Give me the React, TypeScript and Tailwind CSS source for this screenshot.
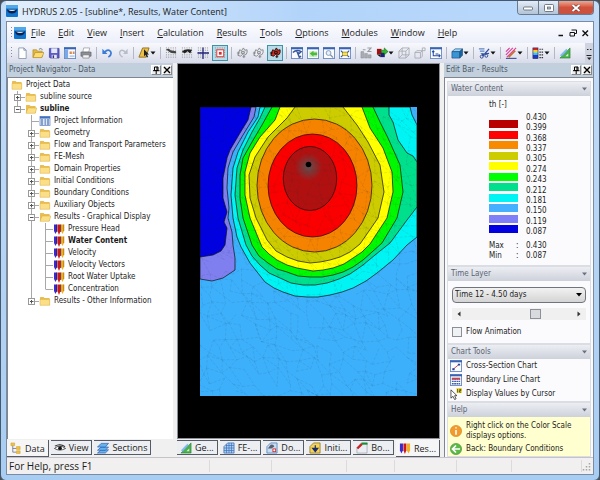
import { useState } from "react";
import type { ReactNode } from "react";
import clsx from "clsx";

type Cell = "blank" | "line" | "tee" | "end" | "plus" | "plusEnd" | "minus" | "minusEnd";
type IconName = "folder" | "open" | "info" | "pens";

const TREE: { label: string; cells: Cell[]; icon: IconName }[] = [
  { label: "Project Data", cells: [], icon: "folder" },
  { label: "subline source", cells: ["plus"], icon: "folder" },
  { label: "subline", cells: ["minusEnd"], icon: "open" },
  { label: "Project Information", cells: ["blank", "tee"], icon: "info" },
  { label: "Geometry", cells: ["blank", "plus"], icon: "folder" },
  { label: "Flow and Transport Parameters", cells: ["blank", "plus"], icon: "folder" },
  { label: "FE-Mesh", cells: ["blank", "plus"], icon: "folder" },
  { label: "Domain Properties", cells: ["blank", "plus"], icon: "folder" },
  { label: "Initial Conditions", cells: ["blank", "plus"], icon: "folder" },
  { label: "Boundary Conditions", cells: ["blank", "plus"], icon: "folder" },
  { label: "Auxiliary Objects", cells: ["blank", "plus"], icon: "folder" },
  { label: "Results - Graphical Display", cells: ["blank", "minus"], icon: "open" },
  { label: "Pressure Head", cells: ["blank", "line", "tee"], icon: "pens" },
  { label: "Water Content", cells: ["blank", "line", "tee"], icon: "pens" },
  { label: "Velocity", cells: ["blank", "line", "tee"], icon: "pens" },
  { label: "Velocity Vectors", cells: ["blank", "line", "tee"], icon: "pens" },
  { label: "Root Water Uptake", cells: ["blank", "line", "tee"], icon: "pens" },
  { label: "Concentration", cells: ["blank", "line", "end"], icon: "pens" },
  { label: "Results - Other Information", cells: ["blank", "plusEnd"], icon: "folder" },
];

const MENUS = ["File", "Edit", "View", "Insert", "Calculation", "Results", "Tools", "Options", "Modules", "Window", "Help"];

const SCALE = [
  { value: "0.430", color: "bg-[#b80000]" },
  { value: "0.399", color: "bg-[#ff0000]" },
  { value: "0.368", color: "bg-[#f88a00]" },
  { value: "0.337", color: "bg-[#cccc00]" },
  { value: "0.305", color: "bg-[#ffff00]" },
  { value: "0.274", color: "bg-[#00ff00]" },
  { value: "0.243", color: "bg-[#00e08c]" },
  { value: "0.212", color: "bg-[#00f4f4]" },
  { value: "0.181", color: "bg-[#44b0ff]" },
  { value: "0.150", color: "bg-[#7f7ff8]" },
  { value: "0.119", color: "bg-[#0000e0]" },
  { value: "0.087", color: "" },
];

function Svg({ w = 12, h = 12, vb, children }: { w?: number; h?: number; vb?: string; children: ReactNode }) {
  return (
    <svg width={w} height={h} viewBox={vb ?? `0 0 ${w} ${h}`} className="shrink-0" aria-hidden="true">
      {children}
    </svg>
  );
}

function TreeCell({ kind }: { kind: Cell }) {
  const box = kind.startsWith("plus") || kind.startsWith("minus");
  const last = kind.endsWith("End") || kind === "end";
  return (
    <Svg w={14} h={12}>
      {kind !== "blank" && <path d={last ? "M6.5 0V6" : "M6.5 0V12"} stroke="#a8a8a8" />}
      {kind !== "blank" && kind !== "line" && <path d="M6.5 6.5H14" stroke="#a8a8a8" />}
      {box && <rect x="3.5" y="3.5" width="6" height="6" fill="#fff" stroke="#999" />}
      {box && <path d="M5 6.5H8.5" stroke="#555" />}
      {kind.startsWith("plus") && <path d="M6.5 5V8.5" stroke="#555" />}
    </Svg>
  );
}

function Pens() {
  return (
    <Svg w={12} h={12}>
      <path d="M1 1.5H4V8L2.5 11L1 8Z" fill="#3a2bd0" />
      <path d="M4.5 1.5H7.5V8L6 12L4.5 8Z" fill="#cc1818" />
      <path d="M8 1.5H11V8L9.5 11L8 8Z" fill="#f0b020" />
      <path d="M3.8 1.5V9M7.6 1.5V9" stroke="#401030" strokeWidth="0.7" />
      <path d="M10.8 1.5V8" stroke="#8a5a10" strokeWidth="0.6" />
    </Svg>
  );
}

function TreeIcon({ name }: { name: IconName }) {
  if (name === "pens") return <Pens />;
  if (name === "info")
    return (
      <Svg>
        <rect x="1" y="1.5" width="10" height="9" fill="#dce9fb" stroke="#6f8fc4" strokeWidth="0.8" />
        <rect x="1" y="1.5" width="10" height="2" fill="#3f6fc0" />
        <path d="M3 4V10M5.5 5H7M8 5H10M5.5 7H7M8 7H10M5.5 9H7M8 9H10" stroke="#33569a" strokeWidth="1" />
      </Svg>
    );
  return (
    <Svg>
      <path d="M1 2.5Q1 2 1.5 2H4.5L5.5 3H10Q10.7 3 10.7 3.7V10H1Z" fill="#e9bd50" />
      {name === "open" ? (
        <path d="M1 10.3L3 5H11.8L10.2 10.3Z" fill="#fbdf86" stroke="#d9a93c" strokeWidth="0.5" />
      ) : (
        <path d="M1 4.4H10.7V10.3H1Z" fill="#fadf88" stroke="#dcae45" strokeWidth="0.5" />
      )}
    </Svg>
  );
}

function AppIcon() {
  return (
    <Svg w={12} h={12}>
      <rect width="12" height="12" rx="1" fill="#1173c9" />
      <rect width="12" height="3.5" fill="#4fa8e8" />
      <path d="M1 4.5H11Q10.5 8.5 6 8.5T1 4.5Z" fill="#08204f" />
      <path d="M2 4.8H10Q8 6 6 6T2 4.8Z" fill="#e8f4ff" />
    </Svg>
  );
}

function PanelHead({ title }: { title: string }) {
  return (
    <div className="flex h-[14px] items-center gap-px bg-[#c2cfdd] pl-0.5 pr-px text-[#4f5b68]">
      <h2 className="flex-1 truncate leading-[12px]">{title}</h2>
      <button aria-label={`Pin ${title}`} className="border border-white border-b-[#888] border-r-[#888] bg-[#f0f0f0]">
        <Svg w={8} h={8}>
          <path d="M2.5 1H6V4.5H2.5ZM1 4.7H7.5M4.2 5V8" fill="none" stroke="#000" />
          <path d="M5 1V5" stroke="#000" />
        </Svg>
      </button>
      <button aria-label={`Close ${title}`} className="border border-white border-b-[#888] border-r-[#888] bg-[#f0f0f0]">
        <Svg w={8} h={8}>
          <path d="M1 1L7 7M7 1L1 7" stroke="#000" strokeWidth="1.4" />
        </Svg>
      </button>
    </div>
  );
}

function WindowFrame({ children }: { children?: ReactNode }) {
  return (
    <>
      <rect x="0.5" y="0.5" width="12" height="12" fill="#fafcff" stroke="#6c8cc0" />
      <path d="M0 1.5H13" stroke="#3864b4" strokeWidth="2" />
      {children}
    </>
  );
}

function Dots({ children }: { children?: ReactNode }) {
  return (
    <>
      {[1, 3.5, 6, 8.5, 11].map((y) => (
        <path key={y} d={`M1 ${y}H13`} stroke="#888" strokeWidth="1" strokeDasharray="1 1.5" />
      ))}
      {children}
    </>
  );
}

function Gear({ color, fill }: { color: string; fill: string }) {
  return (
    <>
      <path d="M4 3L6 4L8 1L9.5 3.5L12 3V6L11 8L8.5 9L7 8L5 10L2 9L3 6Z" fill={fill} stroke={color} strokeWidth="1" />
      <path d="M1 6.5H4M2.5 5V8M8.5 9V12M7 10.5H10M6 5H9V7H6Z" fill="none" stroke={color} strokeWidth="1" />
    </>
  );
}

type Tool = { name: string; art: ReactNode; drop?: boolean; on?: boolean; sep?: boolean };

const TOOLS: Tool[] = [
  { name: "New", art: <path d="M3 1H8.5L11 3.5V12.5H3ZM8.5 1V3.5H11" fill="#fff" stroke="#7486a0" strokeWidth="0.8" /> },
  {
    name: "Open",
    art: (
      <>
        <path d="M1 3H5L6 4.5H11V11H1Z" fill="#e5b83c" stroke="#a57c18" strokeWidth="0.6" />
        <path d="M1 11.5L3.5 6H13L10.5 11.5Z" fill="#fbdd74" stroke="#a57c18" strokeWidth="0.6" />
        <path d="M7.5 2.5Q9.5 0.5 11.5 3" fill="none" stroke="#456" strokeWidth="0.8" />
      </>
    ),
  },
  {
    name: "Save",
    art: (
      <>
        <path d="M1.5 1.5H12V12H2.5L1.5 11Z" fill="#5b5cc8" stroke="#36378c" strokeWidth="0.7" />
        <rect x="3.5" y="1.5" width="6.5" height="5" fill="#e4e8ff" />
        <rect x="4" y="8.5" width="5.5" height="3.5" fill="#e8e8f0" />
        <rect x="5" y="9" width="1.6" height="3" fill="#33347c" />
      </>
    ),
  },
  {
    name: "Project manager",
    art: (
      <WindowFrame>
        <rect x="1" y="2.5" width="3.5" height="9.5" fill="#7aa8e8" />
        <path d="M6 5H8.5V7.5H6ZM9.5 5H11.5V7.5H9.5Z" fill="#d88a50" />
        <path d="M6 9H11.5V11H6Z" fill="#b9cdea" />
      </WindowFrame>
    ),
  },
  {
    name: "Print",
    sep: true,
    art: (
      <>
        <path d="M4 1H10.5L9.5 5.5H3Z" fill="#fff" stroke="#778" strokeWidth="0.6" />
        <path d="M1 5.5H12V10H1Z" fill="#8a9098" stroke="#555" strokeWidth="0.6" />
        <path d="M3 8.5H10V12H3Z" fill="#f2f2f2" stroke="#666" strokeWidth="0.6" />
      </>
    ),
  },
  {
    name: "Undo",
    art: (
      <>
        <path d="M4 5.5Q8 1.5 10.5 5.2Q12 8.5 8 11" fill="none" stroke="#3a7ad8" strokeWidth="1.8" />
        <path d="M1.5 2V7.5H7Z" fill="#3a7ad8" />
      </>
    ),
  },
  {
    name: "Redo",
    sep: true,
    art: (
      <>
        <path d="M9 5.5Q5 1.8 3 5.2Q2 8.5 6 11" fill="none" stroke="#b6bdc8" strokeWidth="1.6" />
        <path d="M11.5 2V7.5H6.5Z" fill="#b6bdc8" />
      </>
    ),
  },
  {
    name: "Select",
    drop: true,
    sep: true,
    art: (
      <>
        <path d="M1 11L5 1H12L8.5 11Z" fill="#ecbf48" stroke="#8a6510" strokeWidth="0.9" />
        <path d="M6.5 2.5V10L8.2 8.5L9.5 11.5L11 10.8L9.8 8H12Z" fill="#222" />
      </>
    ),
  },
  { name: "Grid snap", art: <Dots><path d="M1 2.5Q4 1 6 3.5L12 4.5V7L7 6.5L4 5Z" fill="#444" /></Dots> },
  { name: "Grid origin", art: <Dots><path d="M1 5Q5 1 12 3L10 7L7 4.5L4 7Z" fill="#222" /></Dots> },
  { name: "Axes", art: <Dots><path d="M0.5 6.5H13M6.5 0.5V13" stroke="#23267c" strokeWidth="1.4" /></Dots> },
  {
    name: "Show grid",
    on: true,
    sep: true,
    art: (
      <Dots>
        <rect x="3" y="3" width="7.5" height="7.5" fill="#fff" stroke="#e04848" strokeWidth="1.2" />
        <rect x="5.3" y="5.3" width="3" height="3" fill="#d03030" />
      </Dots>
    ),
  },
  { name: "Mesh nodes", art: <Gear color="#85888e" fill="#dfe1e4" /> },
  { name: "Mesh edges", art: <Gear color="#85888e" fill="#eceef0" /> },
  { name: "Mesh contours", on: true, sep: true, art: <Gear color="#201010" fill="#d02c20" /> },
  {
    name: "Zoom view",
    art: (
      <WindowFrame>
        <path d="M2 6Q6 2 11 5L9 7L7 6L9 11L11 10" fill="none" stroke="#39579b" strokeWidth="1.6" />
      </WindowFrame>
    ),
  },
  {
    name: "Zoom previous",
    art: (
      <WindowFrame>
        <path d="M2.5 4.5H11V11H2.5Z" fill="#c9f0c0" />
        <path d="M3 7L7 4V6H11V9H7V10.5Z" fill="#4fb840" />
      </WindowFrame>
    ),
  },
  {
    name: "Zoom window",
    art: (
      <WindowFrame>
        <circle cx="6" cy="6.5" r="2.6" fill="#e6f1fb" stroke="#8397b0" />
        <path d="M8 8.5L11 11.5" stroke="#8397b0" strokeWidth="1.5" />
      </WindowFrame>
    ),
  },
  {
    name: "Fit to window",
    sep: true,
    art: (
      <WindowFrame>
        <path d="M2 4L4 6M11 4L9 6M2 11L4 9M11 11L9 9" stroke="#2856b0" strokeWidth="1.2" />
        <rect x="4" y="5.5" width="5" height="4" fill="#ffe24a" stroke="#6a6420" strokeWidth="0.6" />
      </WindowFrame>
    ),
  },
  {
    name: "Sort",
    art: (
      <>
        <path d="M1 5H4V12H1ZM5 7H8V12H5ZM9 8.5H12V12H9Z" fill="#a9adb2" stroke="#85898f" strokeWidth="0.5" />
        <path d="M3 3H6M8 1H12L8.5 5H12.5" fill="none" stroke="#999da3" strokeWidth="1.1" />
      </>
    ),
  },
  {
    name: "Colors",
    drop: true,
    art: (
      <>
        <rect x="1" y="2" width="5" height="6" fill="#a01010" />
        <rect x="5" y="6" width="4.5" height="5" fill="#1a2080" />
        <path d="M1 8H5V11Z" fill="#111" />
        <path d="M6 3.5H9V1L13 5L9 8.5V6.5H6Z" fill="#30b830" stroke="#0e5e10" strokeWidth="0.6" />
      </>
    ),
  },
  { name: "Wire box", art: <path d="M1 4.5H8.5V12H1ZM1 4.5L4.5 1H12V8.5L8.5 12M12 1L8.5 4.5M4.5 1V8.5H12M4.5 8.5L1 12" fill="none" stroke="#a4a8ae" strokeWidth="0.9" /> },
  { name: "Rotate box", art: <path d="M1 6H7V12H1ZM1 6L3 4H9V10L7 12M9 4L7 6M9 1H12V4H9Z" fill="none" stroke="#a4a8ae" strokeWidth="0.9" /> },
  {
    name: "Dimensions",
    sep: true,
    art: (
      <WindowFrame>
        <path d="M3.5 4V9.5H11M2.3 5.5L3.5 4L4.7 5.5M9.5 8L11 9.5L9.5 11M6 7.5H9" fill="none" stroke="#234a9e" strokeWidth="1.1" />
      </WindowFrame>
    ),
  },
  {
    name: "Solid view",
    drop: true,
    sep: true,
    art: (
      <>
        <path d="M1 5L4.5 2H12.5L9.5 5Z" fill="#9cd5f4" stroke="#184f80" strokeWidth="0.7" />
        <path d="M1 5H9.5V12H1Z" fill="#3b94d4" stroke="#184f80" strokeWidth="0.7" />
        <path d="M9.5 5L12.5 2V9L9.5 12Z" fill="#1c649e" stroke="#184f80" strokeWidth="0.7" />
      </>
    ),
  },
  {
    name: "Cut section",
    drop: true,
    sep: true,
    art: (
      <>
        <path d="M1 2H7M2 4.5H7M3 7H6" stroke="#5e87c4" strokeWidth="1.2" />
        <path d="M12 2L5 10M4 8L12 7" stroke="#3350a0" strokeWidth="1.4" />
        <circle cx="4" cy="10.5" r="1.6" fill="none" stroke="#2b4694" />
        <circle cx="9" cy="9.5" r="1.6" fill="none" stroke="#2b4694" />
      </>
    ),
  },
  {
    name: "Draw",
    drop: true,
    sep: true,
    art: (
      <>
        <path d="M1 5L5 1M1 8.5L8.5 1M2 11L12 1" stroke="#e0409a" strokeWidth="1.3" />
        <path d="M4 11L11 4" stroke="#c87030" strokeWidth="2" />
        <path d="M1 12.3H12.5" stroke="#30448c" strokeWidth="1.1" />
      </>
    ),
  },
  {
    name: "Color scale",
    drop: true,
    sep: true,
    art: (
      <>
        <path d="M1 1H6.5V3.5H1Z" fill="#e02020" />
        <path d="M1 3.5H6.5V6H1Z" fill="#ffd020" />
        <path d="M1 6H6.5V8.5H1Z" fill="#38c8e8" />
        <path d="M1 8.5H6.5V12.5H1Z" fill="#2038c8" />
        <rect x="1" y="1" width="5.5" height="11.5" fill="none" stroke="#222c60" strokeWidth="0.7" />
        <path d="M8 2.5H12M8 5.5H12M8 8.5H12M8 11.5H12" stroke="#333" strokeWidth="1.2" strokeDasharray="1.6 0.8" />
      </>
    ),
  },
  { name: "Geometry", art: <TriangleArt /> },
];

function TriangleArt() {
  return (
    <>
      <path d="M1 12L12 1V12Z" fill="#4cb04c" stroke="#1f7a30" strokeWidth="0.6" />
      <path d="M7 10H10V7Z" fill="#d9f2d4" />
      <path d="M1 9L8 2L9.5 3.5L3 10.5Z" fill="#6eb2ea" opacity="0.85" />
    </>
  );
}

function Toolbar() {
  return (
    <div className="flex h-5 items-center gap-[2px] overflow-hidden bg-gradient-to-b from-[#f8f9fd] to-[#d8dcea] pl-[3px]">
      <Grip />
      {TOOLS.map((t) => (
        <div key={t.name} className="flex shrink-0 items-center gap-[2px]">
          <button
            aria-label={t.name}
            className={clsx(
              "flex h-4 items-center border",
              t.on ? "border-[#3f93a8] bg-[#b8dce8] px-px" : "border-transparent"
            )}
          >
            <Svg w={12} h={12} vb="0 0 13 13">{t.art}</Svg>
            {t.drop && (
              <Svg w={6} h={4}>
                <path d="M0.5 0.5H5.5L3 3.5Z" fill="#111" />
              </Svg>
            )}
          </button>
          {t.sep && <span className="mx-px h-3 w-px bg-[#b4b8c4]" />}
        </div>
      ))}
      <button aria-label="More tools" className="ml-auto flex h-full w-2 flex-col items-center justify-center bg-[#cfd4e0]">
        <Svg w={6} h={13}>
          <path d="M1 2.5H2.5M4 2.5H5.5M0.5 8.5H5.5" stroke="#222" />
          <path d="M1 10.5H5.5L3.2 13Z" fill="#222" />
        </Svg>
      </button>
    </div>
  );
}

function Grip() {
  return (
    <Svg w={3} h={12}>
      <path d="M1.5 0V12" stroke="#8a90a0" strokeDasharray="1 2" />
    </Svg>
  );
}

const CONTOURS = [
  { fill: "#7f7ff0", d: "M0 0H56L54 10L43 28L33 45L28 61L27 81L29 101L28 111L32 125L33 138L35 151V163L23 171L12 174L0 172Z" },
  { fill: "#0000e0", d: "M0 0H51L48 13L40 26L30 43L27 51L23 71V91L27 105L24 115L27 121L25 138L21 144L13 148L0 150Z" },
  { fill: "#00f4f4", d: "M60 0L58 10L48 25L38 45L33 61L31 88L33 111L37 130L41 140L50 156L65 175L74 181L83 185L95 189L107 190L118 190L130 188L142 185L153 181L166 174L177 166L193 153L207 138L217 130V18L212 8L210 0Z" },
  { fill: "#00e08c", d: "M65 0L60 11L52 25L43 43L37 61L35 88L38 111L46 138L52 149L60 158L69 166L80 171L91 176L103 178L115 178L127 176L139 172L150 167L163 158L175 148L190 136L207 113L217 100V55L213 49L207 46L198 33L193 15L189 8V0Z" },
  { fill: "#00f800", d: "M72 0L62 18L52 35L43 51L40 68V91L43 111L52 138L59 149L68 156L77 162L87 165L98 169L110 170L122 170L133 168L143 165L153 160L163 153L172 145L182 136L197 111L203 85L200 58L188 31L180 15L173 0Z" },
  { fill: "#ffff00", d: "M80 0L75 13L60 30L50 46L45 65V88L50 111L62 140L69 147L77 153L87 158L97 161L113 164L123 163L133 161L144 157L153 151L162 145L170 137L187 111L193 85L192 65L183 41L170 21L162 0Z" },
  { fill: "#cccc00", d: "M95 0L87 11L68 30L55 50L49 68L50 91L56 111L67 133L76 144L87 150L98 154L110 156L120 155L130 153L140 150L150 145L160 137L178 111L184 85L180 58L168 35L157 18L143 0Z" },
];

// Jittered triangular mesh; the hash keeps node positions stable between renders.
function hash(i: number, j: number) {
  const s = Math.sin(i * 127.1 + j * 311.7) * 43758.5453;
  return s - Math.floor(s);
}

function meshPath() {
  const step = 11;
  const pt = (i: number, j: number) =>
    `${(i * step + (hash(i, j) - 0.5) * 9).toFixed(1)} ${(j * step + (hash(j + 50, i) - 0.5) * 9).toFixed(1)}`;
  let d = "";
  for (let j = 0; j < 27; j++) {
    for (let i = 0; i < 20; i++) {
      if (hash(i + 9, j + 4) > 0.3) d += `M${pt(i, j)}L${pt(i + 1, j)}`;
      if (hash(i + 3, j + 8) > 0.3) d += `M${pt(i, j)}L${pt(i, j + 1)}`;
      if (hash(i + 1, j + 2) > 0.4) d += `M${pt(i, j)}L${pt(i + 1, j + 1)}`;
    }
  }
  return d;
}

const MESH = meshPath();

function ContourPlot() {
  return (
    <svg viewBox="0 0 217 289" className="w-[217px] max-w-full" role="img" aria-label="Water content">
      <defs>
        <radialGradient id="source">
          <stop offset="0" stopColor="#5c5050" />
          <stop offset="1" stopColor="#b01010" />
        </radialGradient>
      </defs>
      <rect width="217" height="289" fill="#3db0fc" />
      {CONTOURS.map((c) => (
        <path key={c.d} d={c.d} fill={c.fill} stroke="#101010" strokeWidth="0.7" strokeLinejoin="round" />
      ))}
      <g stroke="#101010" strokeWidth="0.7">
        <ellipse cx="114.5" cy="78.5" rx="57.5" ry="66.5" fill="#f58300" />
        <ellipse cx="112.5" cy="78.5" rx="44.5" ry="51.5" fill="#fa0000" />
        <ellipse cx="110" cy="71.5" rx="26.7" ry="32" fill="#b01010" />
      </g>
      <circle cx="108.5" cy="60" r="14" fill="url(#source)" />
      <path d={MESH} stroke="#203040" strokeWidth="0.5" strokeDasharray="3 1.5" opacity="0.2" fill="none" />
      <circle cx="108.5" cy="57.5" r="2.8" fill="#000" />
    </svg>
  );
}

function Section({ title, className, children }: { title: string; className?: string; children: ReactNode }) {
  return (
    <section className="border border-[#dadde4] bg-[#fbfbfd]">
      <h3 className="flex h-[14px] items-center justify-between bg-gradient-to-b from-[#eceef3] to-[#cdd1da] px-[3px] text-[#5a6474]">
        {title}
        <Svg w={5} h={4}>
          <path d="M0 0.5H5L2.5 3.5Z" fill="#6a7080" />
        </Svg>
      </h3>
      <div className={className}>{children}</div>
    </section>
  );
}

function EditBar() {
  const [animate, setAnimate] = useState(false);
  return (
    <aside className="flex w-[149px] shrink-0 flex-col">
      <PanelHead title="Edit Bar - Results" />
      <div className="flex flex-1 flex-col border-l border-t border-[#808690] bg-[#fbfbfd] px-[2px] pt-[3px]">
        <Section title="Water Content" className="pb-1 pl-[41px] pt-[3px]">
          <div className="mb-[2px] leading-[12px]">th [-]</div>
          <div className="flex gap-2">
            <div className="flex h-[120px] w-[29px] flex-col justify-between pt-[7px]">
              {SCALE.filter((s) => s.color).map((s) => (
                <div key={s.value} className={clsx("h-2", s.color)} />
              ))}
            </div>
            <div className="flex h-[124px] flex-col justify-between">
              {SCALE.map((s) => (
                <div key={s.value} className="h-[10px] leading-[10px]">{s.value}</div>
              ))}
            </div>
          </div>
          <dl className="mt-1 grid grid-cols-[27px_10px_1fr] leading-[10px]">
            <dt>Max</dt><dd>:</dd><dd>0.430</dd>
            <dt>Min</dt><dd>:</dd><dd>0.087</dd>
          </dl>
        </Section>
        <Section title="Time Layer" className="px-1 pb-1.5 pt-1.5">
          <div className="relative">
            <select
              aria-label="Time layer"
              className="block h-4 w-full appearance-none rounded-sm border border-[#70747c] bg-gradient-to-b from-[#f2f2f2] to-[#d4d4d4] px-0.5 leading-[14px]"
            >
              <option>Time 12 - 4.50 days</option>
            </select>
            <span className="pointer-events-none absolute right-1 top-1.5">
              <Svg w={6} h={4}>
                <path d="M0 0H6L3 3.5Z" fill="#000" />
              </Svg>
            </span>
          </div>
          <div className="mt-[5px] flex h-3 items-center gap-1 bg-[#f0f0f0] px-1">
            <Svg w={6} h={8}><path d="M4.5 1.5V6.5L1.5 4Z" fill="#333" /></Svg>
            <input
              type="range"
              aria-label="Time step"
              defaultValue={67}
              className="h-3 min-w-0 flex-1 appearance-none bg-transparent [&::-webkit-slider-thumb]:h-[10px] [&::-webkit-slider-thumb]:w-[11px] [&::-webkit-slider-thumb]:appearance-none [&::-webkit-slider-thumb]:border [&::-webkit-slider-thumb]:border-[#8c9098] [&::-webkit-slider-thumb]:bg-[#d8dade]"
            />
            <Svg w={6} h={8}><path d="M1.5 1.5V6.5L4.5 4Z" fill="#333" /></Svg>
          </div>
          <label className="mt-[7px] flex items-center gap-1">
            <input
              type="checkbox"
              checked={animate}
              onChange={(e) => setAnimate(e.target.checked)}
              className="size-[10px] appearance-none border border-[#8a8e96] bg-[#f0f1f3] checked:bg-[#3a7ad8]"
            />
            Flow Animation
          </label>
        </Section>
        <Section title="Chart Tools" className="flex flex-col px-0.5">
          <button className="flex h-[14px] items-center gap-1 text-left">
            <Svg vb="0 0 13 13">
              <WindowFrame><path d="M3.5 10L9.5 5" stroke="#d04040" /><path d="M2.5 9H5V11H2.5ZM8.5 4H11V6H8.5Z" fill="#28409a" /></WindowFrame>
            </Svg>
            Cross-Section Chart
          </button>
          <button className="flex h-[14px] items-center gap-1 text-left">
            <Svg vb="0 0 13 13">
              <WindowFrame><path d="M2 5.5H11M2 8H11M2 10.5H11" stroke="#4060b0" strokeWidth="1.5" strokeDasharray="2 0.5" /><path d="M2 5H11" stroke="#d04040" strokeWidth="2" /></WindowFrame>
            </Svg>
            Boundary Line Chart
          </button>
          <button className="flex h-[14px] items-center gap-1 text-left">
            <Svg vb="0 0 13 13">
              <path d="M1 2V11L3.3 9L5 12.5L6.6 11.7L5 8.3H7.5Z" fill="#fff" stroke="#222" strokeWidth="0.8" />
              <rect x="7" y="0" width="6" height="5.5" fill="#f4e040" />
              <path d="M8.3 1V5M10 1.5H11.8V2.8H10.2V4.5H12" fill="none" stroke="#222" strokeWidth="0.8" />
            </Svg>
            Display Values by Cursor
          </button>
        </Section>
        <Section title="Help" className="flex flex-col gap-px bg-[#ffffcf] px-0.5 pt-1">
          <div className="flex items-center gap-1 leading-[10px]">
            <Svg vb="0 0 12 12">
              <circle cx="6" cy="6" r="5.6" fill="#f29a2e" stroke="#d97d10" strokeWidth="0.6" />
              <path d="M6 2.2V3.6M6 5V9.8" stroke="#fff" strokeWidth="1.6" />
            </Svg>
            <p className="max-w-[110px]">Right click on the Color Scale displays options.</p>
          </div>
          <button className="flex h-[14px] items-center gap-1 text-left">
            <Svg vb="0 0 12 12">
              <circle cx="6" cy="6" r="5.6" fill="#5cb848" stroke="#3f9030" strokeWidth="0.6" />
              <path d="M6 2.5L2.5 6L6 9.5M2.8 6H10" fill="none" stroke="#fff" strokeWidth="1.7" />
            </Svg>
            Back: Boundary Conditions
          </button>
        </Section>
      </div>
    </aside>
  );
}

const LEFT_TABS: { label: string; art: ReactNode }[] = [
  {
    label: "Data",
    art: (
      <>
        <path d="M3 3V11H7M3 7H7" fill="none" stroke="#667" strokeWidth="0.8" />
        <path d="M1 1H5V4H1ZM7 5H11V8H7ZM7 9.5H11V12.5H7Z" fill="#efc33c" stroke="#c8962a" strokeWidth="0.5" />
      </>
    ),
  },
  {
    label: "View",
    art: (
      <>
        <path d="M0.5 7Q6 2 12.5 7Q6 10.5 0.5 7Z" fill="#fff" stroke="#222" strokeWidth="0.8" />
        <circle cx="6.5" cy="6.7" r="2" fill="#111" />
        <path d="M1 4.5Q6.5 1 12 5" fill="none" stroke="#222" strokeWidth="1.1" />
      </>
    ),
  },
  {
    label: "Sections",
    art: (
      <g fill="#69b1ee" stroke="#1d58a8" strokeWidth="0.7">
        <path d="M0.5 12L4.5 8.5H12.5L9 12Z" />
        <path d="M0.5 9L4.5 5.5H12.5L9 9Z" />
        <path d="M0.5 5.5L4.5 1.5H12.5L9 5.5Z" />
      </g>
    ),
  },
];

const VIEW_TABS: { label: string; art: ReactNode }[] = [
  { label: "Ge...", art: <TriangleArt /> },
  {
    label: "FE-...",
    art: (
      <>
        <path d="M1 12V5L5 1H12V12Z" fill="#a8cdf4" stroke="#3a6cb4" strokeWidth="0.8" />
        <path d="M1 6.5H12M1 9.2H12M3 3.8H12M3.8 2.5V12M6.5 1V12M9.2 1V12" stroke="#3a6cb4" strokeWidth="0.7" />
      </>
    ),
  },
  {
    label: "Do...",
    art: (
      <>
        <path d="M1 12V5L5 1H12V12Z" fill="#c6dcf2" stroke="#4878b4" strokeWidth="0.8" />
        <path d="M2 7L5 3Q8 2 9 5L6 7Z" fill="#5a6070" />
        <rect x="7.5" y="7.5" width="3" height="3" fill="#fff" stroke="#c83030" />
      </>
    ),
  },
  {
    label: "Initi...",
    art: (
      <>
        <path d="M1 12V5L5 1H12V12Z" fill="#f4d458" stroke="#8a6c18" strokeWidth="0.8" />
        <path d="M6.8 3.5V8M4 7L6.8 10.3L9.5 7Z" fill="#1a2c6c" stroke="#1a2c6c" strokeWidth="1.3" />
      </>
    ),
  },
  {
    label: "Bo...",
    art: (
      <>
        <path d="M1 12V6L6 1H12V12Z" fill="#e8eef4" stroke="#889" strokeWidth="0.6" />
        <path d="M1.5 7L6.5 2" stroke="#d02020" strokeWidth="2.4" />
        <path d="M6 1.8H12.5" stroke="#189030" strokeWidth="2.2" />
      </>
    ),
  },
  {
    label: "Res...",
    art: (
      <>
        <path d="M1 1.5H4.3V9L2.6 12.5L1 9Z" fill="#3a2bd0" />
        <path d="M4.8 1.5H8V9L6.4 13L4.8 9Z" fill="#cc1818" />
        <path d="M8.5 1.5H12V9L10.3 12.5L8.5 9Z" fill="#f0b020" />
      </>
    ),
  },
];

function Tabs({ tabs, active, fill }: { tabs: { label: string; art: ReactNode }[]; active: string; fill?: boolean }) {
  return (
    <div role="tablist" className="flex h-[17px] gap-[2px] font-['Open_Sans',sans-serif] text-[9px]">
      {tabs.map((t) => (
        <button
          key={t.label}
          role="tab"
          aria-selected={t.label === active}
          className={clsx(
            "flex items-center gap-[3px] border-b border-r border-[#555b66] px-[3px]",
            fill && "flex-1",
            t.label === active ? "h-[17px] bg-[#f6f6f6]" : "h-[15px] border-t bg-[#eceef1]"
          )}
        >
          <Svg w={12} h={12} vb="0 0 13 13">{t.art}</Svg>
          {t.label}
        </button>
      ))}
    </div>
  );
}

export default function App() {
  return (
    <div className="flex min-h-screen flex-col bg-[#4a5058] font-['Open_Sans',sans-serif] text-[9px] leading-none text-[#1c1c1c]">
      <div className="flex flex-1 flex-col rounded-md border border-[#46586c] bg-gradient-to-b from-[#c4dcf8] to-[#a8cdf2] px-[5px] pb-[5px]">
        <header className="flex h-5 items-start justify-between bg-gradient-to-r from-[#e2eefb] via-[#b3d4fa] to-[#b9dafb]">
          <h1 className="flex items-center gap-1 pt-1">
            <AppIcon />
            HYDRUS 2.05 - [subline*, Results, Water Content]
          </h1>
          <div className="flex h-[14px] overflow-hidden rounded-b border border-t-0 border-[#6d7a8c]">
            <button aria-label="Minimize" className="flex w-[21px] items-center justify-center border-r border-[#6d7a8c] bg-gradient-to-b from-[#e4ecf6] to-[#b3c4d8]">
              <Svg w={10} h={6}><rect x="0.5" y="2" width="9" height="3" rx="1" fill="#fff" stroke="#56606c" strokeWidth="0.8" /></Svg>
            </button>
            <button aria-label="Restore" className="flex w-[20px] items-center justify-center border-r border-[#6d7a8c] bg-gradient-to-b from-[#e4ecf6] to-[#b3c4d8]">
              <Svg w={10} h={8}><rect x="0.5" y="0.5" width="9" height="7" rx="1" fill="#fff" stroke="#56606c" strokeWidth="0.8" /><rect x="3.5" y="3" width="3" height="2" fill="#b3c4d8" stroke="#56606c" strokeWidth="0.7" /></Svg>
            </button>
            <button aria-label="Close" className="flex w-[34px] items-center justify-center bg-gradient-to-b from-[#eba894] via-[#d3503a] to-[#c65444]">
              <Svg w={10} h={8}>
                <path d="M1.5 1L8.5 7M8.5 1L1.5 7" stroke="#6a3030" strokeWidth="3" />
                <path d="M1.5 1L8.5 7M8.5 1L1.5 7" stroke="#fff" strokeWidth="2" />
              </Svg>
            </button>
          </div>
        </header>

        <div className="flex flex-1 flex-col border border-[#7c8ca0] bg-[#f0f0f0]">
          <nav className="flex h-[21px] items-center bg-gradient-to-b from-[#fdfdff] to-[#eceffa] pl-[3px]">
            <Grip />
            <span className="ml-px">
              <AppIcon />
            </span>
            <ul className="ml-[5px] flex gap-[13px]">
              {MENUS.map((m) => (
                <li key={m}>
                  <button>
                    <span className="underline">{m[0]}</span>
                    {m.slice(1)}
                  </button>
                </li>
              ))}
            </ul>
            <div className="ml-auto flex gap-1 pr-1">
              <button aria-label="Minimize document"><Svg w={8} h={8}><path d="M1.5 6.5H6" stroke="#111" strokeWidth="1.5" /></Svg></button>
              <button aria-label="Restore document"><Svg w={8} h={8}><path d="M2.5 1H7.5V4.5H5.5M1 3.5H5.5V7H1Z" fill="none" stroke="#111" /></Svg></button>
              <button aria-label="Close document"><Svg w={8} h={8}><path d="M1.5 1.5L7 7M7 1.5L1.5 7" stroke="#111" strokeWidth="1.4" /></Svg></button>
            </div>
          </nav>
          <Toolbar />

          <main className="flex flex-1 gap-1 font-['DejaVu_Sans_Condensed','DejaVu_Sans',sans-serif] text-[8px]">
            <section className="flex w-[166px] shrink-0 flex-col">
              <PanelHead title="Project Navigator - Data" />
              <ul className="mb-px flex-1 border-l border-t border-[#808690] bg-white pl-[3px] pt-px">
                {TREE.map((row) => (
                  <li key={row.label} className="flex h-3 items-center whitespace-nowrap">
                    {row.cells.map((c, i) => (
                      <TreeCell key={i} kind={c} />
                    ))}
                    <TreeIcon name={row.icon} />
                    <a
                      href="#"
                      className={clsx("ml-[3px]", (row.label === "subline" || row.label === "Water Content") && "font-bold")}
                    >
                      {row.label}
                    </a>
                  </li>
                ))}
              </ul>
              <Tabs tabs={LEFT_TABS} active="Data" />
            </section>

            <section className="flex min-w-0 flex-1 flex-col">
              <div className="mb-px flex flex-1 items-center justify-center border border-[#8c9098] bg-black">
                <ContourPlot />
              </div>
              <Tabs tabs={VIEW_TABS} active="Res..." fill />
            </section>

            <EditBar />
          </main>

          <footer className="flex h-[17px] items-center border-t border-[#c4c4c8] bg-[#f1efef] px-0.5">
            <span className="w-[200px] text-[10px]">For Help, press F1</span>
            <div className="flex h-3 flex-1 divide-x divide-[#dcdada] border-x border-[#dcdada]">
              <span className="flex-[62]" />
              <span className="flex-[76]" />
              <span className="flex-[48]" />
              <span className="flex-[62]" />
              <span className="flex-[56]" />
              <span className="flex-[70]" />
            </div>
            <Svg w={9} h={9}>
              <path d="M7.5 1V2.5M7.5 4V5.5M7.5 7V8.5M4.5 4V5.5M4.5 7V8.5M1.5 7V8.5" stroke="#a8a8a8" strokeWidth="1.5" />
            </Svg>
          </footer>
        </div>
      </div>
    </div>
  );
}
